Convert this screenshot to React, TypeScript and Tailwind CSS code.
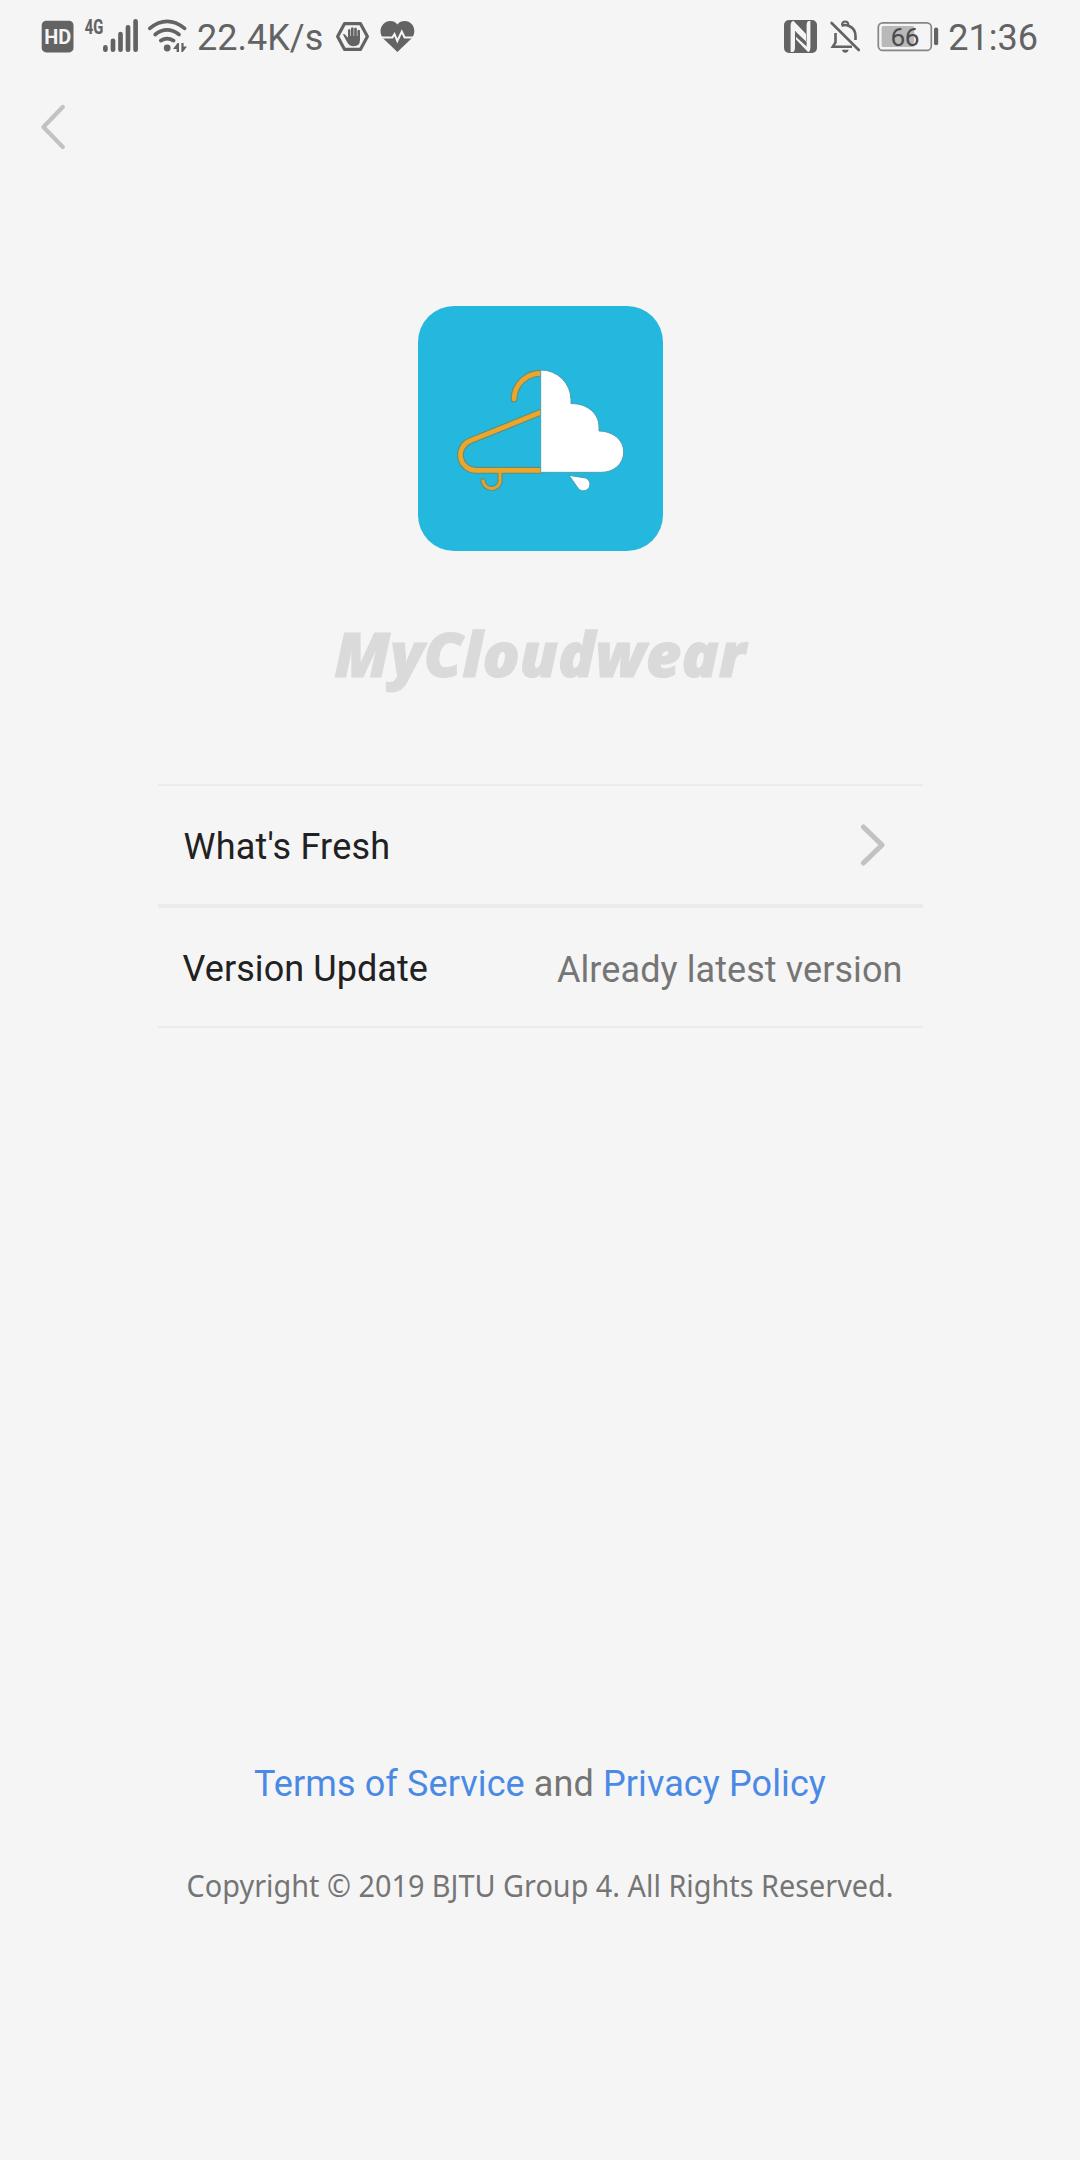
const INK = "#636363";

function StatusBar() {
  return (
    <header className="flex h-[72px] items-start text-[#636363]">
      <svg className="ml-[40px] h-[72px] w-[36px]" viewBox="40 0 36 72">
        <rect x="41.7" y="20.8" width="31.8" height="31.6" rx="4.5" fill={INK} />
        <text x="57.7" y="44" textAnchor="middle" textLength="27" lengthAdjust="spacingAndGlyphs" fontFamily="Roboto, sans-serif" fontWeight="700" fontSize="21" fill="#f5f5f5">HD</text>
      </svg>
      <svg className="ml-[8px] h-[72px] w-[56px]" viewBox="84 0 56 72">
        <text x="84.8" y="33.8" textLength="18.5" lengthAdjust="spacingAndGlyphs" fontFamily="Roboto, sans-serif" fontWeight="700" fontSize="20.5" fill={INK} stroke={INK} strokeWidth="0.2">4G</text>
        <g stroke={INK} strokeWidth="4.7" strokeLinecap="round">
          <path d="M105.4 47.4V49.7M113 40.8V49.7M120.5 34.2V49.7M128 27.3V49.7M135.6 21.3V49.7" />
        </g>
      </svg>
      <svg className="ml-[7px] h-[72px] w-[42px]" viewBox="147 0 42 72">
        <g fill="none" stroke={INK} strokeWidth="3.7" strokeLinecap="round">
          <path d="M149.8 28.4Q167 14.5 184.6 28.4" />
          <path d="M155.2 34.5Q167 25.2 179 34.5" />
          <path d="M160.8 40.6Q167 36.6 173.6 40.6" />
        </g>
        <circle cx="167.2" cy="48" r="3.4" fill={INK} />
        <path d="M173 49L177.6 43H179V52H176.6V49ZM181.4 43H183.6V46.4H187L182.8 52H181.4Z" fill={INK} />
      </svg>
      <span className="ml-[8px] mt-[17px] text-[36px] leading-[42px]">22.4K/s</span>
      <svg className="ml-[12px] h-[72px] w-[36px]" viewBox="335 0 36 72">
        <path d="M344.6 23.6H360.4L367.4 36.5L360.4 49.4H344.6L337.6 36.5Z" fill="none" stroke={INK} strokeWidth="3.2" strokeLinejoin="round" />
        <path d="M343 34.5Q343.6 33.6 345 34.6L348 37.8V30Q349.2 28.2 350.4 30V36H351V28Q352.2 26.4 353.6 28V36H354.2V28.4Q355.6 26.8 356.8 28.4V36H357.4V30.4Q358.8 29 360 30.4V40Q360 46.2 353.6 46.2Q349 46.2 347 42Z" fill={INK} />
      </svg>
      <svg className="ml-[8px] h-[72px] w-[38px]" viewBox="379 0 38 72">
        <path d="M397.4 52L383.5 38.8C376.5 30.5 383 21 390 21C394 21 396.2 22.8 397.4 24.6C398.6 22.8 401 21 405 21C412.5 21 418 30.5 411.3 38.8Z" fill={INK} />
        <path d="M379 37.4H392.4L394.5 34.2L397.3 41L401.8 31.6L404.6 37.4H417" fill="none" stroke="#f5f5f5" strokeWidth="2" />
      </svg>
      <svg className="ml-auto h-[72px] w-[35px]" viewBox="783 0 35 72">
        <rect x="784" y="20" width="33" height="33" rx="5" fill={INK} />
        <path d="M790.6 52V26Q790.6 21 793.6 21L806 34V42L795 31V47Q795 52 792.6 52ZM810.4 21V47Q810.4 52 808 52L796 39.5V31.5L806.6 41.5V26Q806.6 21 809 21Z" fill="#f5f5f5" />
        <path d="M795 31L806.6 42V46.4L795 36Z" fill={INK} />
      </svg>
      <svg className="ml-[11px] h-[72px] w-[32px]" viewBox="829 0 32 72">
        <path d="M841.5 25.8Q845 24.2 848.5 25.8Q855.5 28.5 855.5 36V40M835.5 33V42.5L832.8 46.8H852" fill="none" stroke={INK} strokeWidth="2.6" />
        <path d="M842 25Q842 21.4 845.2 21.4Q848.4 21.4 848.4 25" fill="none" stroke={INK} strokeWidth="2" />
        <path d="M831.6 23L858.8 50" stroke={INK} strokeWidth="2.6" strokeLinecap="round" />
        <path d="M842 49.8H848.6Q848 52.8 845.3 52.8Q842.6 52.8 842 49.8Z" fill={INK} />
      </svg>
      <svg className="ml-[16px] h-[72px] w-[63px]" viewBox="877 0 63 72">
        <rect x="878.3" y="22.8" width="53" height="27.6" rx="4.5" fill="none" stroke="#858585" strokeWidth="1.7" />
        <rect x="881.6" y="26" width="32.6" height="21" rx="1.5" fill="#b9b9b9" />
        <rect x="934" y="27.4" width="4.2" height="17.8" rx="2" fill={INK} />
        <text x="890.6" y="46" fontFamily="Roboto, sans-serif" fontSize="26.3" textLength="29" fill="#4c4c4c">66</text>
      </svg>
      <span className="ml-[8px] mr-[42px] mt-[17px] text-[36px] leading-[42px]">21:36</span>
    </header>
  );
}

const HANGER = "M342 327A79 79 0 0 1 424 250M424 366L211 452A46 46 0 0 0 228 541H424";
const HANGER_CLIP = "M300 546V576A26 26 0 0 1 249 572";

function Logo() {
  return (
    <svg className="mt-[153px] size-[245px]" viewBox="54 48 735 735">
      <rect x="54" y="48" width="735" height="735" rx="108" fill="#24b8de" />
      <g fill="none" strokeLinecap="round">
        <path d={HANGER} stroke="#5f8f7b" strokeWidth="21" />
        <path d={HANGER_CLIP} stroke="#5f8f7b" strokeWidth="16" />
        <path d={HANGER} stroke="#eba62b" strokeWidth="14" />
        <path d={HANGER_CLIP} stroke="#dda534" strokeWidth="9" />
      </g>
      <g fill="#fff" stroke="#4a9fb5" strokeWidth="3">
        <path d="M422 240A90 90 0 0 1 513 329V341C560 339 597 370 597 410V423C640 424 671 450 671 486C671 522 641 547 605 547H422Z" />
        <path d="M507 556L557 564A20 20 0 1 1 536 597Z" />
      </g>
    </svg>
  );
}

export default function App() {
  return (
    <main className="flex h-[2160px] w-[1080px] flex-col items-center overflow-hidden bg-[#f5f5f5] font-['Roboto',sans-serif]">
      <div className="w-full">
        <StatusBar />
        <button className="mt-[29px] ml-[36px] block h-[52px] w-[32px]" aria-label="Back">
          <svg className="h-[52px] w-[32px]" viewBox="36 101 32 52">
            <path d="M62.8 107L43.4 127L62.8 147" fill="none" stroke="#c2c2c2" strokeWidth="4.2" strokeLinecap="round" strokeLinejoin="round" />
          </svg>
        </button>
      </div>
      <Logo />
      <h1 className="mt-[60px] h-[84px] whitespace-nowrap font-['Open_Sans',sans-serif] text-[61.5px] leading-[84px] font-extrabold text-[#dadada] italic [-webkit-text-stroke:1px_#dadada]">MyCloudwear</h1>
      <section className="mt-[89px] w-[765px] border-y-2 border-[#ebebec]">
        <div className="flex h-[118px] items-center justify-between pr-[35px] pl-[26px]">
          <span className="mt-[4px] text-[36px] leading-[42px] tracking-[0.2px] text-[#212121]">What's Fresh</span>
          <svg className="h-[46px] w-[30px]" viewBox="858 822 30 46">
            <path d="M863.4 827L882 845L863.4 863" fill="none" stroke="#c2c2c2" strokeWidth="5.2" strokeLinecap="round" strokeLinejoin="round" />
          </svg>
        </div>
        <div className="flex h-[122px] items-center justify-between border-t-4 border-[#ebebed] pr-[20px] pl-[25px] text-[36px] leading-[42px]">
          <span className="mt-[4px] tracking-[0.08px] text-[#212121]">Version Update</span>
          <span className="mt-[6px] tracking-[0.08px] text-[#757575]">Already latest version</span>
        </div>
      </section>
      <p className="mt-[735px] text-[36px] leading-[42px] tracking-[0.1px] text-[#757575]">
        <a className="text-[#4a8ae6]">Terms of Service</a> and <a className="text-[#4a8ae6]">Privacy Policy</a>
      </p>
      <p className="mt-[59px] scale-x-[0.93] font-['Noto_Sans',sans-serif] text-[31px] leading-[42px] whitespace-nowrap text-[#757575]">Copyright © 2019 BJTU Group 4. All Rights Reserved.</p>
    </main>
  );
}
